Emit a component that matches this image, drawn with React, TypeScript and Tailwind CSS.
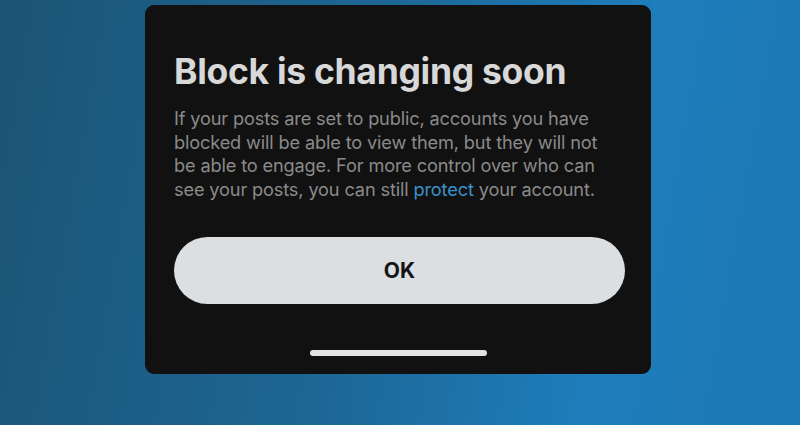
export default function App() {
    return (
        <div className="w-[800px] h-[425px] overflow-hidden bg-[linear-gradient(100deg,#1b5474_0%,#1d6796_45%,#1e7dbb_75%,#1d78b4_100%)] font-['Inter',sans-serif]">
            <div className="ml-[145px] mt-[5px] w-[506px] h-[369px] rounded-[9px] bg-[#111111] flex flex-col px-[29px]">
                <h1 className="mt-[46px] text-[35.5px] leading-[42px] font-bold tracking-[-0.3px] text-[#d8d8d8]">
                    Block is changing soon
                </h1>
                <p className="mt-[14px] text-[18.2px] leading-[23.5px] text-[#8a8a8a] tracking-[-0.15px] whitespace-nowrap">
                    If your posts are set to public, accounts you have
                    <br />
                    blocked will be able to view them, but they will not
                    <br />
                    be able to engage. For more control over who can
                    <br />
                    see your posts, you can still{' '}
                    <span className="text-[#3b91c9]">protect</span> your
                    account.
                </p>
                <button className="mt-[36px] w-[451px] h-[67px] rounded-full bg-[#dcdfe1] text-[#141414] text-[21px] font-bold">
                    OK
                </button>
                <div className="mt-[46px] self-center w-[177px] h-[6px] rounded-full bg-[#e2e2e2]"></div>
            </div>
        </div>
    )
}
